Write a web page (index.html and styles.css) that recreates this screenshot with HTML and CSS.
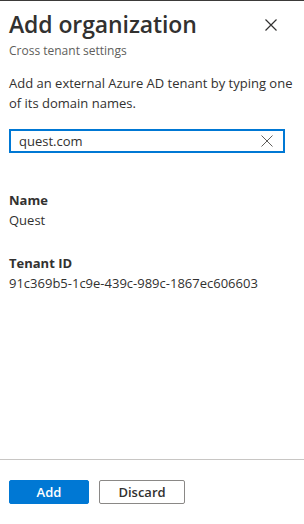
FILE: index.html
```html
<!DOCTYPE html>
<html>
<head>
<meta charset="utf-8">
<link rel="stylesheet" href="styles.css">
</head>
<body>
<div class="panel">
  <header class="head">
    <div class="titles">
      <h1 class="title">Add organization</h1>
      <div class="subtitle">Cross tenant settings</div>
    </div>
    <button class="close" aria-label="Close">
      <svg width="12" height="12" viewBox="0 0 12 12"><path d="M0.5 0.5L11.5 11.5M11.5 0.5L0.5 11.5" stroke="#323130" stroke-width="1.2" fill="none"/></svg>
    </button>
  </header>
  <main class="body">
    <p class="desc">Add an external Azure AD tenant by typing one of its domain names.</p>
    <div class="search">
      <span class="search-text">quest.com</span>
      <svg class="clear" width="12" height="12" viewBox="0 0 12 12"><path d="M0.5 0.5L11.5 11.5M11.5 0.5L0.5 11.5" stroke="#605e5c" stroke-width="1" fill="none"/></svg>
    </div>
    <div class="field first">
      <div class="label">Name</div>
      <div class="value">Quest</div>
    </div>
    <div class="field">
      <div class="label">Tenant ID</div>
      <div class="value">91c369b5-1c9e-439c-989c-1867ec606603</div>
    </div>
  </main>
  <footer class="foot">
    <button class="btn primary">Add</button>
    <button class="btn secondary">Discard</button>
  </footer>
</div>
</body>
</html>
```
FILE: styles.css
```css
* { box-sizing: border-box; }
html, body { margin: 0; padding: 0; height: 100%; }
body {
  font-family: "Open Sans", "Noto Sans", sans-serif;
  color: #323130;
  background: #fff;
}
.panel {
  height: 524px;
  border-top: 1px solid #3b3a39;
  display: flex;
  flex-direction: column;
}
.head {
  display: flex;
  justify-content: space-between;
  align-items: flex-start;
  padding: 9px 27px 0 9px;
}
.title {
  margin: 0;
  font-size: 23px;
  font-weight: 600;
  line-height: 28px;
  color: #323130;
  letter-spacing: -0.1px;
}
.subtitle {
  font-size: 12px;
  line-height: 16px;
  color: #605e5c;
  margin-top: 5px;
}
.close {
  border: 0;
  background: none;
  padding: 0;
  margin-top: 9px;
  width: 12px;
  height: 12px;
  display: flex;
}
.body {
  flex: 1;
  padding: 0 9px;
}
.desc {
  margin: 14px 0 0;
  font-size: 13px;
  line-height: 20px;
  color: #323130;
}
.search {
  margin-top: 16px;
  width: 276px;
  height: 24px;
  border: 2px solid #0078d4;
  display: flex;
  align-items: center;
  justify-content: space-between;
  padding: 0 10px 0 8px;
}
.search-text {
  font-size: 13px;
  color: #323130;
}
.field { margin-top: 23px; }
.field.first { margin-top: 37px; }
.label {
  font-size: 13px;
  font-weight: 700;
  line-height: 20px;
}
.value {
  font-size: 13px;
  line-height: 20px;
}
.foot {
  border-top: 1px solid #c8c6c4;
  height: 65px;
  padding: 20px 9px 0;
  display: flex;
  align-items: flex-start;
  gap: 10px;
}
.btn {
  font-family: inherit;
  font-size: 13px;
  font-weight: 600;
  height: 24px;
  padding: 0;
  border-radius: 2px;
  cursor: pointer;
}
.primary {
  width: 80px;
  background: #0078d4;
  border: 1px solid #0078d4;
  color: #fff;
}
.secondary {
  width: 86px;
  background: #fff;
  border: 1px solid #8a8886;
  color: #323130;
}
```
